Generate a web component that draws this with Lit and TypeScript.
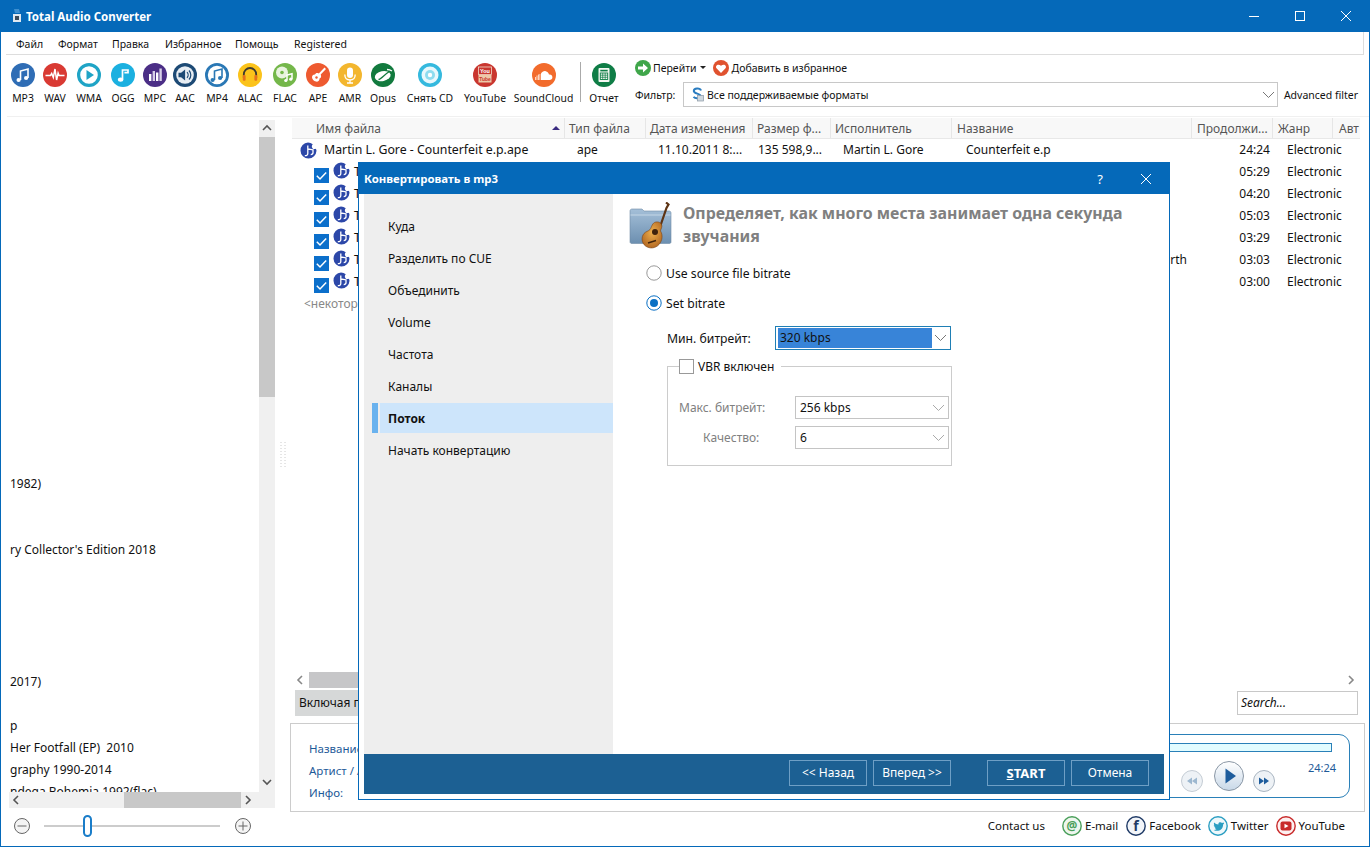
import { LitElement, html, svg, css } from "lit";
import { customElement } from "lit/decorators.js";

const note = (c: string) => svg`<path d="M9.5 17V8l7.5-2v9" fill="none" stroke="${c}" stroke-width="1.6"/><circle cx="7.6" cy="17" r="2.1" fill="${c}"/><circle cx="15.1" cy="15" r="2.1" fill="${c}"/>`;

const toolIcons: Record<string, any> = {
  mp3: svg`<circle cx="12" cy="12" r="12" fill="#2f6db5"/>${note("#fff")}`,
  wav: svg`<circle cx="12" cy="12" r="12" fill="#d93a33"/><path d="M2.5 12.5h5l1.2-2 1.6 4 1.7-8.5 1.6 11 1.5-7 1 2.5h5.4" fill="none" stroke="#fff" stroke-width="1.5"/>`,
  wma: svg`<circle cx="12" cy="12" r="10.4" fill="#fff" stroke="#1fa4c6" stroke-width="3.2"/><path d="M9.5 7l7.5 5-7.5 5z" fill="#1fa4c6"/>`,
  ogg: svg`<circle cx="12" cy="12" r="12" fill="#1bb0e0"/><path d="M11.5 16.5V7h5.5v2.6h-3.6" fill="none" stroke="#fff" stroke-width="1.7"/><ellipse cx="9.6" cy="16.6" rx="2.7" ry="2.2" fill="#fff"/>`,
  mpc: svg`<circle cx="12" cy="12" r="12" fill="#4b2e86"/><rect x="6" y="11" width="2.4" height="7" fill="#fff"/><rect x="9.6" y="8" width="2.4" height="10" fill="#d8d0e8"/><rect x="13" y="9.5" width="2.4" height="8.5" fill="#fff"/><rect x="16.4" y="5.5" width="2.4" height="12.5" fill="#d8d0e8"/>`,
  aac: svg`<circle cx="12" cy="12" r="12" fill="#1d4a75"/><circle cx="12" cy="12" r="8.8" fill="#e7edf3"/><path d="M5.5 9.8h2.6l4-3.4v11.2l-4-3.4H5.500z" fill="#1d4a75"/><path d="M14 9.2a4 4 0 010 5.600M16 7.500a6.500 6.500 0 010 9" fill="none" stroke="#1d4a75" stroke-width="1.2"/>`,
  mp4: svg`<circle cx="12" cy="12" r="10.6" fill="#fff" stroke="#2a78b5" stroke-width="2.800"/>${note("#2a78b5")}`,
  alac: svg`<circle cx="12" cy="12" r="12" fill="#fbc31b"/><path d="M5.800 15v-3.500a6.200 6.500 0 0112.400 0V15" fill="none" stroke="#3d3a30" stroke-width="1.800"/><rect x="4.800" y="12" width="2.800" height="5.800" rx="1" fill="#e3711f"/><rect x="16.400" y="12" width="2.800" height="5.800" rx="1" fill="#e3711f"/>`,
  flac: svg`<circle cx="12" cy="12" r="12" fill="#74b74a"/><circle cx="9" cy="9.500" r="6" fill="#e8f3df"/><circle cx="9" cy="9.500" r="1.800" fill="#74b74a"/><path d="M14 17.500V12l5-1.200v5.200" fill="none" stroke="#fff" stroke-width="1.500"/><circle cx="12.800" cy="17.500" r="1.600" fill="#fff"/><circle cx="17.800" cy="16.200" r="1.600" fill="#fff"/>`,
  ape: svg`<circle cx="12" cy="12" r="12" fill="#ee5a30"/><path d="M18.500 4.500l1.500 1.500-5.300 5.600c1 2.300.2 3.600-1.200 3.900.2 2-1.500 3.500-3.500 3.100-2.300-.5-3.800-2.400-4-4.400-.1-1.700 1.600-3 3-2.700.5-1.500 2-2.100 3.800-1.100z" fill="#fff"/><circle cx="10.500" cy="14.500" r="1.200" fill="#ee5a30"/>`,
  amr: svg`<circle cx="12" cy="12" r="12" fill="#f3b62e"/><rect x="9" y="4.500" width="6" height="10.500" rx="3" fill="#fff"/><path d="M6.800 11.500c0 3.500 2.300 5.500 5.200 5.500s5.200-2 5.200-5.500M12 17v2.500M9 20h6" fill="none" stroke="#fff" stroke-width="1.300"/>`,
  opus: svg`<circle cx="12" cy="12" r="12" fill="#127a3e"/><ellipse cx="11.500" cy="13" rx="8" ry="5" fill="#fff" transform="rotate(-12 12 12)"/><path d="M7.500 16.500C10 16 13 12 19 8" fill="none" stroke="#127a3e" stroke-width="1.300"/><path d="M16 6.500c2.500 0 4 .8 5 1.500" stroke="#fff" stroke-width="1.300" fill="none"/>`,
  cd: svg`<circle cx="12" cy="12" r="12" fill="#35b9de"/><circle cx="12" cy="12" r="8.500" fill="#e9f8fc"/><circle cx="12" cy="12" r="5" fill="#8fdcef"/><circle cx="12" cy="12" r="2.200" fill="#fff"/>`,
  yt: svg`<circle cx="12" cy="12" r="12" fill="#c9362f"/><rect x="5.500" y="4" width="13" height="7.500" fill="none" stroke="#f2dcc8" stroke-width=".8"/><text x="12" y="9.800" font-size="5.500" font-weight="700" text-anchor="middle" fill="#fff" font-family="Liberation Sans">You</text><rect x="5.500" y="12" width="13" height="7.500" fill="#eec9a8"/><text x="12" y="17.700" font-size="5" font-weight="700" text-anchor="middle" fill="#c9362f" font-family="Liberation Sans">Tube</text>`,
  sc: svg`<circle cx="12" cy="12" r="12" fill="#f26b2c"/><path d="M9 17V10.500c1-1.800 2.800-2.700 4.700-2.300 1.900.4 3 1.700 3.300 3.300 1.900-.4 3.400.9 3.400 2.700s-1.300 2.800-2.800 2.800z" fill="#fff"/><path d="M3.500 14v3M5 12.500v4.500M6.500 11.500v5.500M7.900 11v6" stroke="#ffe3d3" stroke-width=".9"/>`,
  report: svg`<circle cx="12" cy="12" r="12" fill="#0f7d46"/><rect x="6.500" y="5" width="11" height="14" rx="1" fill="#f4f8f2"/><rect x="8.300" y="10" width="7.400" height="6.500" fill="none" stroke="#0f7d46" stroke-width=".9"/><path d="M8.300 12.200h7.400M8.300 14.300h7.400M10.700 10v6.500M13.200 10v6.500" stroke="#0f7d46" stroke-width=".7"/><rect x="8.300" y="6.800" width="7.400" height="1.600" fill="#0f7d46"/>`,
};

const tools = [
  ["mp3", "MP3", 32], ["wav", "WAV", 32], ["wma", "WMA", 36], ["ogg", "OGG", 32], ["mpc", "MPC", 32], ["aac", "AAC", 28],
  ["mp4", "MP4", 36], ["alac", "ALAC", 30], ["flac", "FLAC", 40], ["ape", "APE", 26], ["amr", "AMR", 38], ["opus", "Opus", 28],
  ["cd", "Снять CD", 66], ["yt", "YouTube", 44], ["sc", "SoundCloud", 73],
] as [string, string, number][];

const chev = (c = "#777") => html`<svg class="chev" width="13" height="8" viewBox="0 0 13 8"><path d="M1 1l5.500 5.500L12 1" fill="none" stroke="${c}"/></svg>`;
const arrow = (d: string, c = "#555") => {
  const p: Record<string, string> = { u: "M1 6l4-4 4 4", d: "M1 2l4 4 4-4", l: "M6 1L2 5l4 4", r: "M2 1l4 4-4 4" };
  return html`<svg width="10" height="10" viewBox="0 0 10 10"><path d="${p[d]}" fill="none" stroke="${c}" stroke-width="1.600"/></svg>`;
};
const fileIcon = html`<svg class="fi" width="17" height="17" viewBox="0 0 17 17"><path d="M8 .5a8 8 0 108.500 8.300c-.1-.9-.3-1.500-.6-2.100-1.300.8-2.900.4-3.600-.8-.8-1.200-.5-2.800.5-3.700A8 8 0 008 .5z" fill="#2c47a8"/><path d="M7.800 3.500v8c0 1.500-1.200 2.300-3 2.200M7.800 7c1.800 0 3.300.8 5.200.8v3c0 1.200-1 1.800-2.300 1.800" fill="none" stroke="#fff" stroke-width="1.300"/></svg>`;
const checkOn = html`<svg class="cb" width="15" height="15" viewBox="0 0 15 15"><rect width="15" height="15" fill="#0b6fcb"/><path d="M2.800 7.800l3.200 3.200 6.200-6.500" fill="none" stroke="#fff" stroke-width="1.500"/></svg>`;

const treeRows: Record<number, string> = {
  16: "1982)", 19: "ry Collector's Edition 2018", 25: "2017)", 27: "p", 28: "Her Footfall (EP)  2010", 29: "graphy 1990-2014", 30: "ndega Bohemia 1992(flac)",
};
const heads = ["Имя файла", "Тип файла", "Дата изменения", "Размер ф...", "Исполнитель", "Название", "Продолжи...", "Жанр", "Авт"];
const tracks = ["05:29", "04:20", "05:03", "03:29", "03:03", "03:00"];
const nav = ["Куда", "Разделить по CUE", "Объединить", "Volume", "Частота", "Каналы", "Поток", "Начать конвертацию"];

@customElement("app-root")
export class AppRoot extends LitElement {
  static styles = css`
    :host { display: block; width: 1370px; height: 847px; overflow: hidden; font-family: "Noto Sans", "Liberation Sans", sans-serif; font-size: 11.500px; color: #111; }
    * { box-sizing: border-box; }
    svg { display: block; flex: none; }
    .win { position: relative; width: 1370px; height: 847px; border: 1px solid #0569b9; border-top: 0; background: #fff; display: flex; flex-direction: column; }
    .title { height: 32px; background: #0569b9; color: #fff; display: flex; align-items: center; margin: 0 -1px; flex: none; }
    .app-ic { margin-left: 12px; margin-right: 4px; }
    .title b { font-size: 11.500px; font-weight: 700; }
    .winbtns { margin-left: auto; margin-right: 1px; display: flex; }
    .winbtns span { width: 46px; height: 32px; display: flex; align-items: center; justify-content: center; }
    .menu { height: 23px; margin: 0 5px; border-bottom: 1px solid #ddd; border-right: 1px solid #ddd; display: flex; flex: none; align-items: center; padding: 2px 0 0 10px; font-size: 10.500px; }
    .menu span:nth-child(1) { width: 42px; } .menu span:nth-child(2) { width: 54px; } .menu span:nth-child(3) { width: 53px; }
    .menu span:nth-child(4) { width: 70px; } .menu span:nth-child(5) { width: 59px; }
    .toolbar { height: 62px; flex: none; display: flex; margin-left: 6px; border-bottom: 1px solid #f0f0f0; }
    .tool { display: flex; flex-direction: column; align-items: center; padding-top: 8px; flex: none; }
    .tool span { margin-top: 3px; font-size: 10.400px; white-space: nowrap; line-height: 16px; }
    .sep { width: 1px; height: 40px; background: #aaa; margin-top: 7px; flex: none; }
    .tb-right { margin-left: 8px; width: 723px; display: flex; flex-direction: column; }
    .tb-r1 { display: flex; align-items: center; height: 17px; margin-top: 4px; font-size: 10.500px; }
    .caret { width: 0; height: 0; border: 3px solid transparent; border-top: 3px solid #222; margin: 3px 7px 0 3px; }
    .tb-r2 { display: flex; align-items: center; margin-top: 6px; font-size: 10.500px; }
    .tb-r2 > .fl { width: 48px; flex: none; }
    .fselect { width: 595px; height: 25px; border: 1px solid #c8c8c8; display: flex; align-items: center; padding-left: 7px; gap: 3px; }
    .fselect .chev { margin-left: auto; margin-right: 2px; }
    .adv { margin-left: 6px; white-space: nowrap; }
    .main { flex: 1; display: flex; min-height: 0; }
    .left { width: 274px; flex: none; padding-left: 8px; display: grid; grid-template-columns: 250px 16px; grid-template-rows: 675px 16px; }
    .tree { overflow: hidden; padding-top: 4px; font-size: 12px; }
    .tree div { height: 22px; line-height: 22px; white-space: pre; padding-left: 1px; }
    .vs { margin-top: 3px; background: #f0f0f0; display: flex; flex-direction: column; align-items: center; }
    .vs .th { width: 100%; height: 260px; background: #c8c8c8; margin-top: 1px; flex: none; }
    .vs .a { height: 12px; margin-top: 4px; }
    .vs .b { margin-top: auto; margin-bottom: 4px; }
    .hs { grid-column: 1 / 3; background: #f0f0f0; display: flex; align-items: center; padding-left: 3px; height: 16px; width: 266px; }
    .hs .th { width: 117px; height: 16px; background: #c8c8c8; margin-left: 102px; }
    .hs .r { margin-left: 3px; }
    .split { width: 15px; flex: none; display: flex; align-items: center; justify-content: center; padding-bottom: 20px; }
    .right { width: 1075px; flex: none; display: flex; flex-direction: column; }
    .list { height: 573px; flex: none; padding-left: 2px; padding-top: 1px; display: flex; flex-direction: column; position: relative; }
    .hdr, .row { display: grid; grid-template-columns: 273px 81px 107px 78px 121px 240px 81px 60px 27px; }
    .hdr { height: 21px; background: #f8f8f8; border-bottom: 1px solid #e8e8e8; color: #555; font-size: 12px; line-height: 21px; width: 1068px; flex: none; }
    .hdr div { padding-left: 4px; border-right: 1px solid #e6e6e6; white-space: nowrap; overflow: hidden; position: relative; }
    .hdr div:first-child { padding-left: 24px; display: flex; align-items: center; justify-content: space-between; padding-right: 4px; }
    .hdr div:nth-child(n+6) { padding-left: 5px; }
    .hdr div:last-child { border: 0; padding-left: 6px; }
    .sort { width: 0; height: 0; border: 4px solid transparent; border-bottom: 4px solid #3a2a80; border-top: 0; }
    .row { height: 22px; line-height: 22px; font-size: 12px; white-space: nowrap; width: 1068px; flex: none; }
    .row div { overflow: visible; padding-left: 12px; }
    .row .nm { display: flex; align-items: center; padding-left: 8px; gap: 7px; font-size: 12.300px; }
    .row .nm.sub { padding-left: 22px; gap: 4px; }
    .row .nm.sub .fi { margin-top: -4px; }
    .row .nm.sub .cb { margin-top: 6px; }
    .row .tm { text-align: right; padding-right: 3px; padding-left: 0; }
    .row .gn { padding-left: 14px; }
    .row .ttl { text-align: right; padding-right: 5px; padding-left: 0; }
    .some { color: #888; height: 22px; line-height: 22px; padding-left: 12px; font-size: 12px; flex: none; }
    .lhs { margin-top: auto; margin-bottom: 2px; height: 16px; width: 1064px; margin-left: 3px; display: flex; align-items: center; padding-left: 1px; flex: none; }
    .lhs .th { width: 700px; height: 16px; background: #c6c6c8; margin-left: 3px; }
    .lhs .r { margin-left: auto; margin-right: 2px; }
    .status { height: 26px; flex: none; display: flex; padding-left: 5px; align-items: flex-start; }
    .sbar { width: 860px; height: 26px; background: #d6d8d8; line-height: 26px; padding-left: 4px; font-size: 12px; }
    .search { margin-left: auto; margin-right: 7px; margin-top: 1px; width: 121px; height: 24px; border: 1px solid #c8c8c8; font-style: italic; font-size: 12px; line-height: 21px; padding-left: 3px; }
    .player { margin-top: 7px; height: 89px; flex: none; border: 1px solid #ccc; display: flex; padding: 10px 14px 13px 18px; }
    .labels { color: #1e5a98; font-size: 11.500px; padding-top: 4px; width: 130px; flex: none; white-space: nowrap; }
    .labels div { height: 22px; line-height: 22px; }
    .pbox { flex: 1; border: 1px solid #2a80b8; border-radius: 11px; padding: 8px 17px 0 0; display: flex; flex-direction: column; }
    .pbar { height: 9px; background: #e2fcff; border: 1px solid #2a80b8; flex: none; margin-left: 30px; }
    .pctl { display: flex; justify-content: flex-end; align-items: flex-start; padding-top: 9px; margin-right: -8px; }
    .pctl .small { margin-top: 9px; }
    .pctl .b1 { margin-left: 11px; }
    .pctl .b2 { margin-left: 9px; }
    .pctl .tm { margin-left: 33px; font-size: 11px; color: #1e5a98; line-height: 14px; width: 32px; margin-top: 0; }
    .foot { height: 34px; flex: none; display: flex; align-items: center; padding-bottom: 6px; font-size: 11.500px; }
    .slider { display: flex; align-items: center; margin-left: 13px; }
    .track { width: 176px; height: 2px; background: #ccc; margin: 0 15px 0 14px; position: relative; }
    .thumb { position: absolute; left: 39px; top: -10px; width: 9px; height: 22px; border: 2px solid #1a7dc9; border-radius: 5px; background: #fff; }
    .contact { margin-left: auto; margin-right: 24px; display: flex; align-items: center; }
    .contact span { margin-top: -2px; }
    .contact .c { margin-right: 17px; }
    .contact svg { margin-right: 3px; }
    .contact .s { margin-right: 7px; }
    .contact .s.e { margin-right: 8px; }
    .dlg { position: absolute; left: 357px; top: 162px; width: 812px; height: 638px; border: 1px solid #0569b9; background: #fff; display: flex; flex-direction: column; padding: 0 5px 5px; }
    .dtitle { height: 31px; margin: 0 -5px; flex: none; background: #0569b9; color: #fff; display: flex; align-items: center; padding-left: 5px; font-weight: 700; font-size: 11.400px; }
    .dtitle .btns { margin-left: auto; display: flex; align-items: center; }
    .dtitle .q { width: 46px; text-align: center; font-weight: 400; font-size: 13px; }
    .dtitle .x { width: 46px; display: flex; justify-content: center; }
    .dbody { flex: 1; display: flex; min-height: 0; }
    .dnav { width: 249px; flex: none; background: #eeeeee; padding: 17px 0 0 8px; font-size: 12px; }
    .nitem { display: flex; height: 30px; margin-bottom: 2px; }
    .nitem .m { width: 6px; margin-right: 2px; flex: none; }
    .nitem .l { flex: 1; padding-left: 8px; line-height: 32px; }
    .nitem.on .m { background: #6ab2ee; }
    .nitem.on .l { background: #cde5fb; font-weight: 700; }
    .dmain { flex: 1; padding: 8px 0 0 16px; }
    .dhead { display: flex; gap: 11px; align-items: flex-start; }
    .dhead .t { width: 460px; color: #808080; font-weight: 700; font-size: 15.900px; line-height: 23px; }
    .radio { display: flex; align-items: center; height: 20px; margin-left: 17px; gap: 4px; font-size: 12.200px; }
    .radio.r1 { margin-top: 14px; } .radio.r2 { margin-top: 10px; }
    .minrow { display: flex; align-items: center; margin: 13px 0 0 38px; font-size: 12.200px; }
    .minrow .lb { width: 108px; }
    .sel { height: 24px; display: flex; align-items: center; border: 1px solid #bbb; font-size: 12px; }
    .sel .chev { margin-left: auto; margin-right: 3px; }
    .sel.act { width: 176px; border-color: #1f7fb5; padding: 1px 0 1px 2px; }
    .sel.act .hl { width: 154px; height: 100%; background: #3884d8; padding-left: 2px; line-height: 20px; color: #111; }
    fieldset { width: 285px; margin: 8px 0 0 38px; padding: 22px 0 16px 0; border: 1px solid #ccc; min-width: 0; }
    legend { margin-left: 11px; padding: 0 7px 0 0; display: flex; align-items: center; gap: 4px; height: 16px; font-size: 12px; }
    .box { width: 15px; height: 15px; border: 1px solid #999; background: #fff; }
    .grow { display: flex; align-items: center; height: 23px; color: #808080; font-size: 12px; }
    .grow + .grow { margin-top: 7px; }
    .grow .lb { width: 127px; flex: none; white-space: nowrap; }
    .grow .p1 { padding-left: 11px; } .grow .p2 { padding-left: 35px; }
    .grow .sel { width: 154px; height: 23px; padding-left: 4px; color: #111; border-color: #c4c4c4; }
    .dfoot { height: 40px; flex: none; background: #1c6093; display: flex; padding: 6px 0 0 425px; gap: 6px; }
    .dbtn { width: 78px; height: 26px; border: 1px solid #6e9fc5; color: #fff; text-align: center; line-height: 24px; font-size: 12px; }
    .dbtn.st { margin-left: 30px; font-weight: 700; font-size: 13px; }
    .dbtn u { text-decoration: underline; }
  `;

  render() {
    const rows: number[] = [];
    for (let i = 0; i < 31; i++) rows.push(i);
    return html`<div class="win">
      <div class="title">
        <svg class="app-ic" width="10" height="16" viewBox="0 0 10 16"><path d="M2 1h5l1 4H3z" fill="#3d8fd0"/><rect x="1" y="6" width="8" height="8" fill="#dfe8f0"/><rect x="3" y="8" width="4" height="4" fill="#3a4a5a"/></svg>
        <b>Total Audio Converter</b>
        <div class="winbtns">
          <span><svg width="10" height="10" viewBox="0 0 10 10"><path d="M0 5.500h10" stroke="#fff"/></svg></span>
          <span><svg width="10" height="10" viewBox="0 0 10 10"><rect x=".5" y=".5" width="9" height="9" fill="none" stroke="#fff"/></svg></span>
          <span><svg width="10" height="10" viewBox="0 0 10 10"><path d="M0 0l10 10M10 0L0 10" stroke="#fff"/></svg></span>
        </div>
      </div>
      <div class="menu"><span>Файл</span><span>Формат</span><span>Правка</span><span>Избранное</span><span>Помощь</span><span>Registered</span></div>
      <div class="toolbar">
        ${tools.map(([k, l, w]) => html`<div class="tool" style="width:${w}px"><svg width="24" height="24" viewBox="0 0 24 24">${toolIcons[k]}</svg><span>${l}</span></div>`)}
        <div class="sep"></div>
        <div class="tool" style="width:46px"><svg width="24" height="24" viewBox="0 0 24 24">${toolIcons.report}</svg><span>Отчет</span></div>
        <div class="tb-right">
          <div class="tb-r1">
            <svg width="16" height="16" viewBox="0 0 16 16" style="margin-right:2px"><circle cx="8" cy="8" r="8" fill="#3fa64a"/><path d="M3 6.500h5V3.500L13 8l-5 4.500v-3H3z" fill="#fff"/></svg>
            <span>Перейти</span><span class="caret"></span>
            <svg width="16" height="16" viewBox="0 0 16 16" style="margin-right:3px"><circle cx="8" cy="8" r="8" fill="#e0522f"/><path d="M8 13L3.500 8.300C1.800 6 4.800 3.300 8 5.800c3.200-2.500 6.200.2 4.500 2.500z" fill="#fff"/></svg>
            <span>Добавить в избранное</span>
          </div>
          <div class="tb-r2">
            <span class="fl">Фильтр:</span>
            <div class="fselect">
              <svg width="13" height="15" viewBox="0 0 13 15"><path d="M10 3.500C9 .8 2.800 1 2.800 4c0 3 6.700 2.300 6.700 5 0 2.500-5 3-7 .8" fill="none" stroke="#2a7cc0" stroke-width="2"/><rect x="6.500" y="8.500" width="6" height="5.500" fill="#cfd8df" stroke="#8a98a4" stroke-width=".7"/></svg>
              <span>Все поддерживаемые форматы</span>
              ${chev()}
            </div>
            <span class="adv">Advanced filter</span>
          </div>
        </div>
      </div>
      <div class="main">
        <div class="left">
          <div class="tree">${rows.map((i) => html`<div>${treeRows[i] ?? ""}</div>`)}</div>
          <div class="vs"><div class="a">${arrow("u")}</div><div class="th"></div><div class="b">${arrow("d")}</div></div>
          <div class="hs">${arrow("l")}<div class="th"></div><div class="r">${arrow("r")}</div></div>
        </div>
        <div class="split"><svg width="6" height="26" viewBox="0 0 6 26"><path d="M1 0v26M5 0v26" stroke="#ccc" stroke-dasharray="1 2"/></svg></div>
        <div class="right">
          <div class="list">
            <div class="hdr">${heads.map((h, i) => html`<div>${h}${i === 0 ? html`<span class="sort"></span>` : ""}</div>`)}</div>
            <div class="row">
              <div class="nm">${fileIcon}<span>Martin L. Gore - Counterfeit e.p.ape</span></div>
              <div>ape</div><div>11.10.2011 8:...</div><div style="padding-left:5px">135 598,9...</div><div>Martin L. Gore</div><div style="padding-left:14px">Counterfeit e.p</div><div class="tm">24:24</div><div class="gn">Electronic</div><div></div>
            </div>
            ${tracks.map((t, i) => html`<div class="row">
              <div class="nm sub">${checkOn}${fileIcon}<span>T</span></div>
              <div></div><div></div><div></div><div></div><div class="ttl">${i === 4 ? "rth" : ""}</div><div class="tm">${t}</div><div class="gn">Electronic</div><div></div>
            </div>`)}
            <div class="some">&lt;некотор</div>
            <div class="lhs">${arrow("l", "#888")}<div class="th"></div><div class="r">${arrow("r", "#888")}</div></div>
          </div>
          <div class="status"><div class="sbar">Включая подпапки</div><div class="search">Search...</div></div>
          <div class="player">
            <div class="labels"><div>Название:</div><div>Артист / Альбом:</div><div>Инфо:</div></div>
            <div class="pbox">
              <div class="pbar"></div>
              <div class="pctl">
                <svg class="small" width="22" height="22" viewBox="0 0 22 22"><circle cx="11" cy="11" r="10.500" fill="#eef2f6" stroke="#c4ccd4"/><path d="M11 7.500v7L6 11zM16 7.500v7L11 11z" fill="#9db8d0"/></svg>
                <svg class="b1" width="30" height="30" viewBox="0 0 30 30"><defs><linearGradient id="pg" x1="0" y1="0" x2="0" y2="1"><stop offset="0" stop-color="#fff"/><stop offset="1" stop-color="#c8d8e8"/></linearGradient></defs><circle cx="15" cy="15" r="14.500" fill="url(#pg)" stroke="#8a97a5"/><path d="M11.500 7.500L22 15l-10.500 7.500z" fill="#1d5c9c"/></svg>
                <svg class="small b2" width="22" height="22" viewBox="0 0 22 22"><circle cx="11" cy="11" r="10.500" fill="#eef2f6" stroke="#a8b4c0"/><path d="M6 7.500v7l5-3.500zM11 7.500v7l5-3.500z" fill="#1d5c9c"/></svg>
                <div class="tm">24:24</div>
              </div>
            </div>
          </div>
        </div>
      </div>
      <div class="foot">
        <div class="slider">
          <svg width="16" height="16" viewBox="0 0 16 16"><circle cx="8" cy="8" r="7.500" fill="#f4f4f4" stroke="#666"/><path d="M3.500 8h9" stroke="#666"/></svg>
          <div class="track"><div class="thumb"></div></div>
          <svg width="16" height="16" viewBox="0 0 16 16"><circle cx="8" cy="8" r="7.500" fill="#f4f4f4" stroke="#666"/><path d="M3.500 8h9M8 3.500v9" stroke="#666"/></svg>
        </div>
        <div class="contact">
          <span class="c">Contact us</span>
          <svg width="20" height="20" viewBox="0 0 20 20"><circle cx="10" cy="10" r="9.200" fill="#eef6ee" stroke="#4a9f5a" stroke-width="1.400"/><text x="10" y="14" font-size="12" font-weight="700" text-anchor="middle" fill="#4a9f5a" font-family="Noto Sans">@</text></svg>
          <span class="s e">E-mail</span>
          <svg width="20" height="20" viewBox="0 0 20 20"><circle cx="10" cy="10" r="9.200" fill="#f2f5f9" stroke="#1f3a66" stroke-width="1.400"/><text x="10" y="15" font-size="14" font-weight="700" text-anchor="middle" fill="#1f3a66" font-family="Noto Sans">f</text></svg>
          <span class="s">Facebook</span>
          <svg width="20" height="20" viewBox="0 0 20 20"><circle cx="10" cy="10" r="9.200" fill="#eef8fb" stroke="#2b9ec2" stroke-width="1.400"/><path d="M15.500 6.500c-.5.300-1 .4-1.500.5-.6-.7-1.500-1-2.300-.7-.9.300-1.400 1.200-1.300 2.100-1.700 0-3.200-.8-4.200-2-.6 1-.3 2.300.6 3-.4 0-.7-.1-1-.3 0 1.100.8 2 1.800 2.300-.3.100-.6.100-1 0 .3.900 1.100 1.500 2 1.600-1 .7-2 1-3 .9 3.700 2.200 9.500.7 9.500-5.400.4-.4.800-.8 1-1.300z" fill="#2b9ec2"/></svg>
          <span class="s">Twitter</span>
          <svg width="20" height="20" viewBox="0 0 20 20"><circle cx="10" cy="10" r="9.200" fill="#fdf0f0" stroke="#c82a2a" stroke-width="1.400"/><rect x="4.500" y="5.500" width="11" height="9" rx="2" fill="#c82a2a"/><path d="M8.500 7.800l4 2.200-4 2.200z" fill="#fff"/></svg>
          <span>YouTube</span>
        </div>
      </div>
      <div class="dlg">
        <div class="dtitle"><span>Конвертировать в mp3</span>
          <div class="btns"><span class="q">?</span><span class="x"><svg width="10" height="10" viewBox="0 0 10 10"><path d="M0 0l10 10M10 0L0 10" stroke="#fff"/></svg></span></div>
        </div>
        <div class="dbody">
          <div class="dnav">${nav.map((n, i) => html`<div class="nitem ${i === 6 ? "on" : ""}"><span class="m"></span><span class="l">${n}</span></div>`)}</div>
          <div class="dmain">
            <div class="dhead">
              <svg width="43" height="47" viewBox="0 0 43 47">
                <defs>
                  <linearGradient id="fd" x1="0" y1="0" x2="0" y2="1"><stop offset="0" stop-color="#a4bfd8"/><stop offset="1" stop-color="#6c8fb0"/></linearGradient>
                  <radialGradient id="gt" cx=".5" cy=".4" r=".65"><stop offset="0" stop-color="#eeb04e"/><stop offset="1" stop-color="#b0651f"/></radialGradient>
                </defs>
                <path d="M1 9c0-1 .6-2 2-2h10l2 2h25c1.200 0 2 .8 2 2v29c0 1-.8 1.500-2 1.500H3c-1.200 0-2-.6-2-1.500z" fill="url(#fd)" stroke="#6e8ba6" stroke-width=".6"/>
                <path d="M1.500 13h40" stroke="#c4d6e6"/>
                <path d="M37 .5l2.500 2-2 3.500-6.500 19" stroke="#5e3414" stroke-width="2.200" fill="none"/>
                <path d="M27 20c3.500-.5 6 1.500 5.800 4.500-.1 2-1.300 3-1.300 4.500 2.500 4 2 9.500-1.500 13.500-3.500 4-9.500 4.500-13.500 1.500-4-3-4.500-9-1.500-12.500 2-2.200 4.500-2.200 6-4 1.500-1.800 2-7 6-7.500z" fill="url(#gt)" stroke="#7a4314" stroke-width=".6"/>
                <circle cx="26" cy="30" r="3" fill="#3f220c"/>
                <path d="M19 41l8-2.500" stroke="#3f220c" stroke-width="1.500"/>
              </svg>
              <div class="t">Определяет, как много места занимает одна секунда звучания</div>
            </div>
            <div class="radio r1"><svg width="16" height="16" viewBox="0 0 16 16"><circle cx="8" cy="8" r="7.200" fill="#fff" stroke="#999"/></svg><span>Use source file bitrate</span></div>
            <div class="radio r2"><svg width="16" height="16" viewBox="0 0 16 16"><circle cx="8" cy="8" r="7.200" fill="#fff" stroke="#0a70c4"/><circle cx="8" cy="8" r="4" fill="#0a70c4"/></svg><span>Set bitrate</span></div>
            <div class="minrow"><span class="lb">Мин. битрейт:</span><div class="sel act"><div class="hl">320 kbps</div>${chev()}</div></div>
            <fieldset>
              <legend><span class="box"></span><span>VBR включен</span></legend>
              <div class="grow"><span class="lb p1">Макс. битрейт:</span><div class="sel"><span>256 kbps</span>${chev("#aaa")}</div></div>
              <div class="grow"><span class="lb p2">Качество:</span><div class="sel"><span>6</span>${chev("#aaa")}</div></div>
            </fieldset>
          </div>
        </div>
        <div class="dfoot">
          <div class="dbtn">&lt;&lt; Назад</div><div class="dbtn">Вперед &gt;&gt;</div>
          <div class="dbtn st"><u>S</u>TART</div><div class="dbtn">Отмена</div>
        </div>
      </div>
    </div>`;
  }
}
